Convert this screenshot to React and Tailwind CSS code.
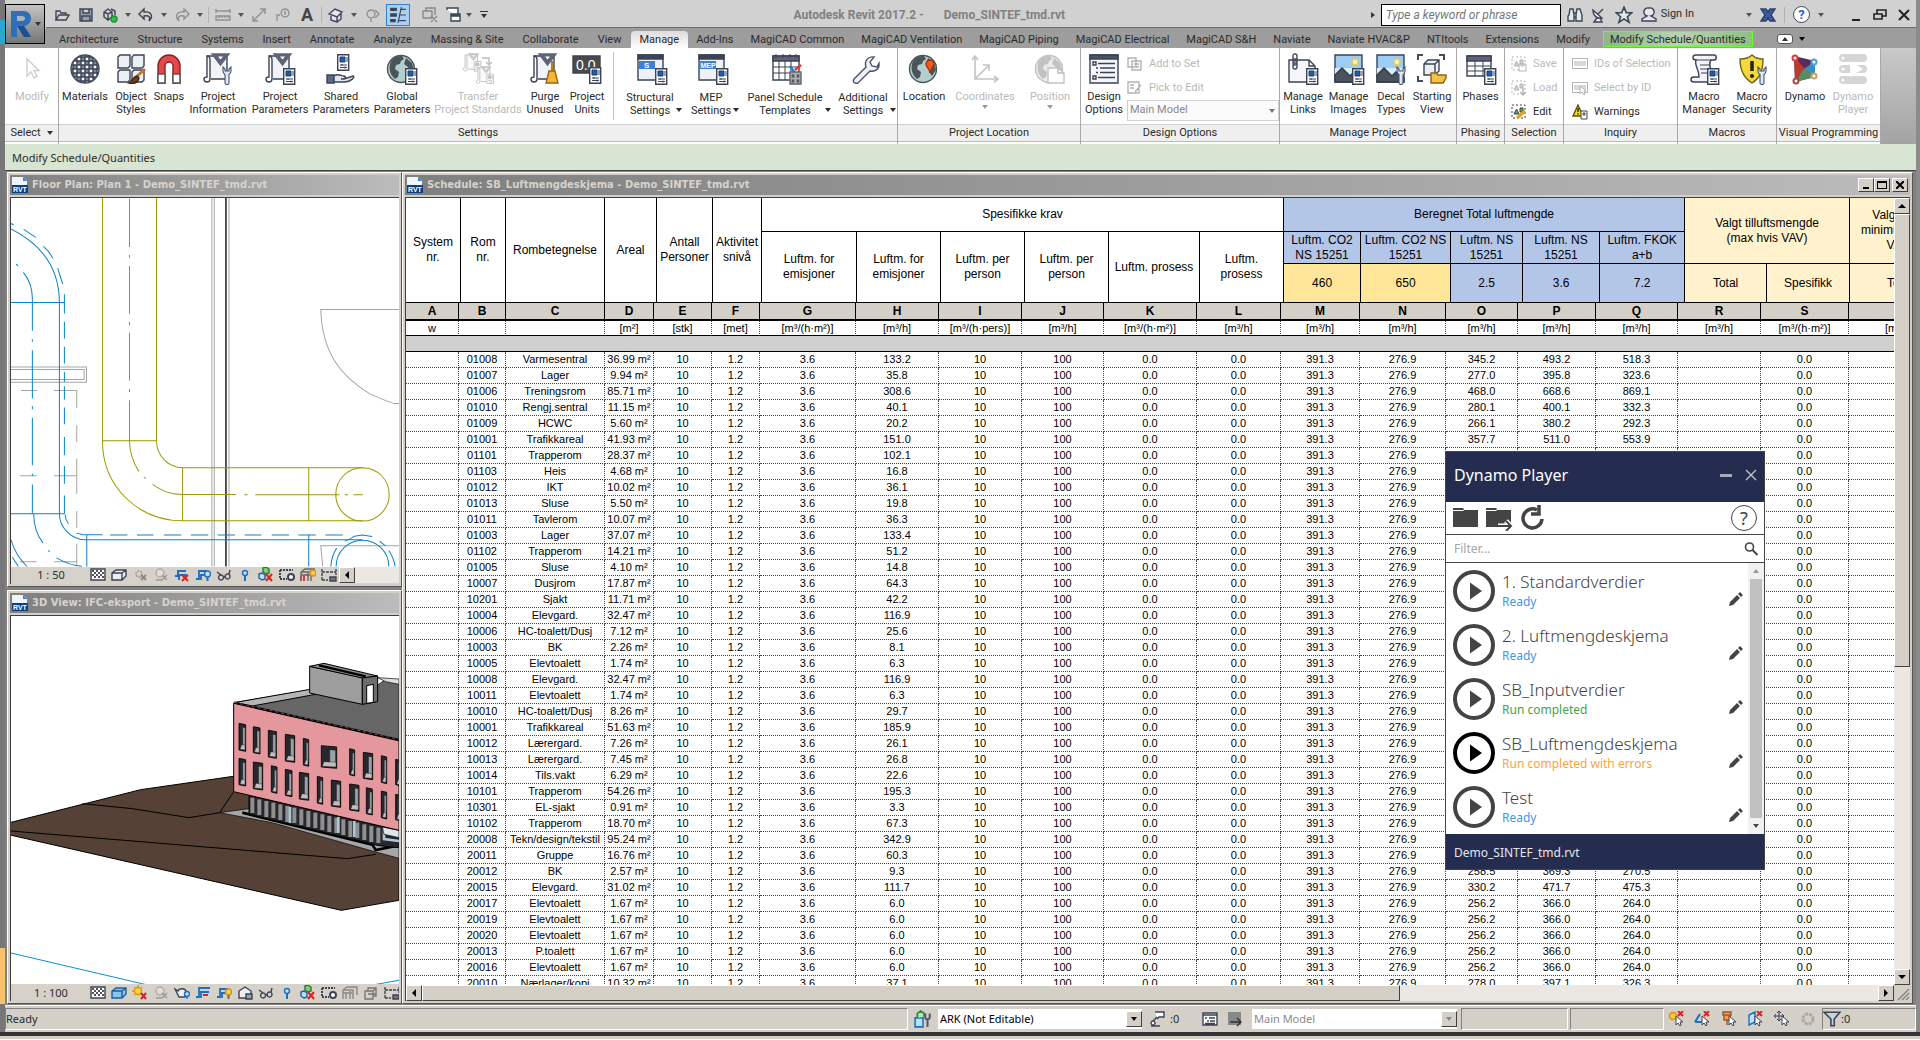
import React, { useState } from 'react';
import clsx from 'clsx';

const tabs = [
  'Architecture', 'Structure', 'Systems', 'Insert', 'Annotate', 'Analyze', 'Massing & Site',
  'Collaborate', 'View', 'Manage', 'Add-Ins', 'MagiCAD Common', 'MagiCAD Ventilation',
  'MagiCAD Piping', 'MagiCAD Electrical', 'MagiCAD S&H', 'Naviate', 'Naviate HVAC&P',
  'NTItools', 'Extensions', 'Modify',
];

// [rom nr, name, area, emission, O, P, Q]
const rooms = [
  ['01008', 'Varmesentral', '36.99', '133.2', '345.2', '493.2', '518.3'],
  ['01007', 'Lager', '9.94', '35.8', '277.0', '395.8', '323.6'],
  ['01006', 'Treningsrom', '85.71', '308.6', '468.0', '668.6', '869.1'],
  ['01010', 'Rengj.sentral', '11.15', '40.1', '280.1', '400.1', '332.3'],
  ['01009', 'HCWC', '5.60', '20.2', '266.1', '380.2', '292.3'],
  ['01001', 'Trafikkareal', '41.93', '151.0', '357.7', '511.0', '553.9'],
  ['01101', 'Trapperom', '28.37', '102.1'],
  ['01103', 'Heis', '4.68', '16.8'],
  ['01012', 'IKT', '10.02', '36.1'],
  ['01013', 'Sluse', '5.50', '19.8'],
  ['01011', 'Tavlerom', '10.07', '36.3'],
  ['01003', 'Lager', '37.07', '133.4'],
  ['01102', 'Trapperom', '14.21', '51.2'],
  ['01005', 'Sluse', '4.10', '14.8'],
  ['10007', 'Dusjrom', '17.87', '64.3'],
  ['10201', 'Sjakt', '11.71', '42.2'],
  ['10004', 'Elevgard.', '32.47', '116.9'],
  ['10006', 'HC-toalett/Dusj', '7.12', '25.6'],
  ['10003', 'BK', '2.26', '8.1'],
  ['10005', 'Elevtoalett', '1.74', '6.3'],
  ['10008', 'Elevgard.', '32.47', '116.9'],
  ['10011', 'Elevtoalett', '1.74', '6.3'],
  ['10010', 'HC-toalett/Dusj', '8.26', '29.7'],
  ['10001', 'Trafikkareal', '51.63', '185.9'],
  ['10012', 'Lærergard.', '7.26', '26.1'],
  ['10013', 'Lærergard.', '7.45', '26.8'],
  ['10014', 'Tils.vakt', '6.29', '22.6'],
  ['10101', 'Trapperom', '54.26', '195.3'],
  ['10301', 'EL-sjakt', '0.91', '3.3'],
  ['10102', 'Trapperom', '18.70', '67.3'],
  ['20008', 'Tekn/design/tekstil', '95.24', '342.9'],
  ['20011', 'Gruppe', '16.76', '60.3'],
  ['20012', 'BK', '2.57', '9.3', '258.5', '369.3', '270.5'],
  ['20015', 'Elevgard.', '31.02', '111.7', '330.2', '471.7', '475.3'],
  ['20017', 'Elevtoalett', '1.67', '6.0', '256.2', '366.0', '264.0'],
  ['20019', 'Elevtoalett', '1.67', '6.0', '256.2', '366.0', '264.0'],
  ['20020', 'Elevtoalett', '1.67', '6.0', '256.2', '366.0', '264.0'],
  ['20013', 'P.toalett', '1.67', '6.0', '256.2', '366.0', '264.0'],
  ['20016', 'Elevtoalett', '1.67', '6.0', '256.2', '366.0', '264.0'],
  ['20010', 'Nærlager/kopi', '10.32', '37.1', '278.0', '397.1', '326.3'],
];

const headCols = [55, 45, 99, 52, 56, 49, 95, 84, 84, 84, 91, 84, 77, 90, 72, 77, 85, 82, 83, 100];
const bodyCols = [53, 47, 99, 49, 58, 48, 96, 83, 83, 82, 93, 84, 79, 86, 72, 78, 82, 83, 88, 101];
const units = [
  'w', '', '', '[m²]', '[stk]', '[met]', '[m³/(h·m²)]', '[m³/h]', '[m³/(h·pers)]', '[m³/h]', '[m³/(h·m²)]',
  '[m³/h]', '[m³/h]', '[m³/h]', '[m³/h]', '[m³/h]', '[m³/h]', '[m³/h]', '[m³/(h·m²)]', '[m³/h]',
];

const scripts = [
  { name: '1. Standardverdier', status: 'Ready', color: 'text-[#3f97dd]' },
  { name: '2. Luftmengdeskjema', status: 'Ready', color: 'text-[#3f97dd]' },
  { name: 'SB_Inputverdier', status: 'Run completed', color: 'text-[#3fa54a]' },
  { name: 'SB_Luftmengdeskjema', status: 'Run completed with errors', color: 'text-[#fba23c]', active: true },
  { name: 'Test', status: 'Ready', color: 'text-[#3f97dd]' },
];

/* ---------- shared bits ---------- */

function Arrow({ className = 'text-[#333]' }) {
  return (
    <svg viewBox="0 0 6 4" className={clsx('h-1 w-1.5 shrink-0', className)}>
      <path d="M0 0h6L3 4z" fill="currentColor" />
    </svg>
  );
}

function Svg({ s = 32, className = 'size-8', children }) {
  return (
    <svg viewBox={`0 0 ${s} ${s}`} className={clsx('shrink-0', className)} fill="none" stroke="#3b4354" strokeWidth="1.4">
      {children}
    </svg>
  );
}

const Sheet = ({ x = 19, y = 15 }) => (
  <g transform={`translate(${x} ${y})`}>
    <path d="M.7.7h11v15.6H.7z" fill="#fff" />
    <path d="M3 3h5v5H3z" fill="#1f5fa8" stroke="#1b3f73" strokeWidth="1" />
    <path d="M10 3v5M3 11h7M3 13.5h7M5 10v2M8 12.500v2" strokeWidth="1" />
  </g>
);

const Scroll = () => (
  <g>
    <path d="M5 3h20v23H9" fill="#f1f3f6" />
    <path d="M5 3c3 0 3 2 3 4v19c0 4-6 4-6 0 0-2 3-2 3-2z" fill="#fff" />
    <path d="M10 1h17l-8.500 11z" fill="#5d6577" stroke="#5d6577" />
    <path d="M16 3.500h5l-2.500 3z" fill="#fff" stroke="none" />
  </g>
);

const Wrench = ({ x = 20, y = 13 }) => (
  <g transform={`translate(${x} ${y})`}>
    <path d="M1 1v4c0 2 1 3 2 3.500V17c0 2 4 2 4 0V8.500C8 8 9 7 9 5V1L7 3v2H3V3z" fill="#dfe7f1" stroke="#44546f" strokeWidth="1.100" />
  </g>
);

const Globe = () => (
  <g>
    <circle cx="15" cy="16" r="13.500" fill="#b6cdd0" stroke="#4b5658" />
    <path d="M5 8c4-5 8-5 11-5l2 3-3 2-1 3-4 1-1 4 4 3-1 5-3 2C4 22 2 15 5 8zM20 5l6 5 2 7-4 6-3-4 1-5-4-3z" fill="#4a5557" stroke="none" />
  </g>
);

const CalGrid = () => (
  <g>
    <path d="M2 3h24v20H2z" fill="#fff" />
    <path d="M2 3h24v5H2z" fill="#5d6577" />
    <path d="M2 13h24M2 18h24M10 8v15M18 8v15" strokeWidth="1" />
  </g>
);

const Mountain = () => (
  <g>
    <path d="M2 2h27v27H2z" fill="#9ccdf2" />
    <path d="M2 15h27v7H2z" fill="#d9ecfa" stroke="none" />
    <circle cx="22" cy="9" r="3" fill="#fff3b0" stroke="#f2c94c" />
    <path d="M2 22l7-7 8 8 4-4 8 6v4H2z" fill="#4a525e" stroke="#333a46" />
  </g>
);

const Brackets = () => (
  <path d="M2 7V2h5M23 2h5v5M2 23v5h5M28 23v5h-5" stroke="#444c5c" strokeWidth="2" />
);

/* ---------- ribbon icons ---------- */

const icons = {
  modify: (
    <Svg><path d="M11 6v17l4-4 3 6 3-1.500-3-6h5z" stroke="#777" fill="#fff" /></Svg>
  ),
  materials: (
    <Svg>
      <defs>
        <pattern id="chk" width="8" height="8" patternUnits="userSpaceOnUse">
          <path d="M0 0h8v8H0z" fill="#fff" /><path d="M0 0h4v4H0zM4 4h4v4H4z" fill="#7b869c" />
        </pattern>
      </defs>
      <circle cx="16" cy="16" r="14" fill="url(#chk)" stroke="#444c5c" />
    </Svg>
  ),
  objectStyles: (
    <Svg>
      <path d="M3 4l2-2h10v11l-2 2H3zM17 4l2-2h10v11l-2 2H17zM3 19l2-2h10v10l-2 2H3zM17 19l2-2h10v10l-2 2H17z" fill="#eceff3" />
      <path d="M30 16l-10 9" stroke="#c5752b" strokeWidth="3" />
      <path d="M22 23c-4 0-4 5-8 7 5 1 9 0 10-5z" fill="#6d4120" stroke="#40260f" />
    </Svg>
  ),
  snaps: (
    <Svg>
      <path d="M5 30V13a11 11 0 0 1 22 0v17h-7V13a4 4 0 0 0-8 0v17z" fill="#e5484a" stroke="#7d2526" />
      <path d="M5 21h7v9H5zM20 21h7v9h-7z" fill="#fff" stroke="#555" />
    </Svg>
  ),
  projectInfo: <Svg><Scroll /><Wrench /></Svg>,
  projectParams: <Svg><Scroll /><Sheet /></Svg>,
  sharedParams: (
    <Svg>
      <Sheet x={12} y={1} />
      <path d="M2 22h7v8H2z" fill="#5d6b8a" />
      <path d="M9 23c4-3 7 0 10 0 3 1 1 3-3 3h3l9-3c3 1-3 6-8 6H9z" fill="#dfe4ec" />
    </Svg>
  ),
  globalParams: <Svg><Globe /><Sheet /></Svg>,
  transfer: (
    <Svg>
      <g transform="scale(.62)"><Scroll /><Sheet x={19} y={13} /></g>
      <path d="M20 5h7v7M24 9l3 3 3-3" />
      <g transform="translate(13 13) scale(.6)"><Scroll /><Sheet x={19} y={13} /></g>
    </Svg>
  ),
  purge: (
    <Svg>
      <Scroll />
      <path d="M23 8v10" stroke="#b77a1c" strokeWidth="2" />
      <path d="M20 18h6l3 12H17z" fill="#f3b53a" stroke="#9a6510" />
    </Svg>
  ),
  units: (
    <Svg>
      <path d="M2 3h27v17H2z" fill="#4a4a4a" />
      <text x="5" y="17" fontSize="14" fill="#fff" stroke="none" fontFamily="Liberation Sans">0.0</text>
      <Sheet x={18} y={14} />
    </Svg>
  ),
  structural: (
    <Svg>
      <path d="M2 2h25v25H2z" fill="#eef1f5" /><path d="M2 2h25v4H2z" fill="#3b4354" />
      <path d="M3 8h16v8H3z" fill="#3f7fd0" stroke="none" />
      <text x="8" y="15" fontSize="8" fontWeight="bold" fill="#fff" stroke="none" fontFamily="Liberation Sans">S</text>
      <Sheet />
    </Svg>
  ),
  mep: (
    <Svg>
      <path d="M2 2h25v25H2z" fill="#eef1f5" /><path d="M2 2h25v4H2z" fill="#3b4354" />
      <path d="M3 8h16v8H3z" fill="#3f7fd0" stroke="none" />
      <text x="3.500" y="15" fontSize="7" fontWeight="bold" fill="#fff" stroke="none" fontFamily="Liberation Sans">MEP</text>
      <Sheet />
    </Svg>
  ),
  panelSchedule: (
    <Svg>
      <path d="M2 3h26v24H2z" fill="#fff" /><path d="M2 3h26v5H2z" fill="#5d6577" />
      <path d="M2 14h26M2 20h26M8 8v19M14 8v19M20 8v19M5 1v4M12 1v4M19 1v4M25 1v4" strokeWidth="1" />
      <path d="M19 13l4 6v3" stroke="#1d7fd6" strokeWidth="2.500" /><path d="M24 17l6-5" stroke="#e33" strokeWidth="2.500" />
      <path d="M19 19h11v12H19z" fill="#a9adb5" stroke="#666" /><path d="M22 21.500v8M27 21.500v8" stroke="#555" strokeDasharray="3 2" strokeWidth="2.500" />
    </Svg>
  ),
  additional: (
    <Svg>
      <path d="M5 26l12-12c-2-6 2-11 8-10l-4 5 2 4 5 1 2-4c1 6-4 9-9 8L9 30c-3 1-6-1-4-4z" fill="#eef1f5" stroke="#4b5465" />
    </Svg>
  ),
  location: (
    <Svg>
      <Globe />
      <path d="M22 20c0-4-4-6-4-9a4 4 0 0 1 8 0c0 3-4 5-4 9z" fill="#f2581c" stroke="#a33208" />
    </Svg>
  ),
  coordinates: (
    <Svg><path d="M6 4v22h22M6 26L20 12M14 12h6v6M3 7l3-4 3 4M25 23l4 3-4 3" stroke="#555" strokeWidth="1.600" /></Svg>
  ),
  position: (
    <Svg><Globe /><path d="M14 15h10l6 5v10H14z" fill="#fff" stroke="#555" /><path d="M24 15v5h6" /></Svg>
  ),
  designOptions: (
    <Svg>
      <path d="M2 2h28v28H2z" fill="#f4f6f9" /><path d="M2 2h28v4H2z" fill="#4a5263" />
      <path d="M5 9h3v3H5zM5 23h3v3H5zM10 10.500h17M12 15h15M12 19.500h15M10 24.500h17M8 15h2M8 19.500h2" />
    </Svg>
  ),
  links: (
    <Svg>
      <path d="M2 7h20l6 6v16H2z" fill="#f5f7fa" /><path d="M22 7v6h6" />
      <path d="M7 1h1a2 2 0 0 1 2 2v3a2 2 0 0 1-4 0V3a2 2 0 0 1 1-2zM7 6h1a2 2 0 0 1 2 2v2a2 2 0 0 1-4 0V8a2 2 0 0 1 1-2zM7 10h1a2 2 0 0 1 2 2v2a2 2 0 0 1-4 0v-2a2 2 0 0 1 1-2z" stroke="#444c5c" />
      <Sheet />
    </Svg>
  ),
  images: <Svg><Mountain /><Sheet /></Svg>,
  decal: <Svg><Mountain /><Wrench x={21} /></Svg>,
  starting: (
    <Svg>
      <Brackets />
      <path d="M8 11l4-4h11v11l-4 4H8zM8 11h11v11M19 11l4-4" fill="#eceff3" />
      <path d="M15 20h5l2 2h8v3l-3 5H15z" fill="#f3c04a" stroke="#8b6412" />
    </Svg>
  ),
  phases: <Svg><CalGrid /><Sheet /></Svg>,
  macroManager: (
    <Svg>
      <path d="M8 2h18c3 0 3 5 0 5h-3c-4 5 2 12 3 22H6c-4 0-4-5 0-5h5C11 16 6 12 8 7c-4 0-4-5 0-5z" fill="#f1f3f6" />
      <path d="M8 7h15M12 12h9M12 16h8M13 20h7" strokeWidth="1" /><Sheet />
    </Svg>
  ),
  macroSecurity: (
    <Svg>
      <path d="M16 2c3 3 7 4 11 4 0 12-3 19-11 24C8 25 4 18 4 6c5 0 9-1 12-4z" fill="#f7d83a" stroke="#6b6420" />
      <path d="M16 8v10" stroke="#222" strokeWidth="3.500" /><circle cx="16" cy="23" r="2" fill="#222" stroke="none" />
      <Wrench x={21} y={13} />
    </Svg>
  ),
  dynamo: (
    <Svg>
      <path d="M5 4l21 5v15L6 29z" fill="#4d3a57" stroke="none" />
      <path d="M5 3l10 12L6 28z" fill="#c0392b" stroke="none" /><path d="M5 3l21 5-10 8z" fill="#5a2a5f" stroke="none" />
      <path d="M26 8v16l-11-8z" fill="#3b8fbf" stroke="none" /><path d="M26 24L6 29l9-14z" fill="#5b8a63" stroke="none" />
      <circle cx="6" cy="5" r="3.500" fill="#d93a3a" stroke="none" /><circle cx="25" cy="9" r="3.500" fill="#47a5d6" stroke="none" />
      <circle cx="25" cy="23" r="3.500" fill="#c9a05a" stroke="none" /><circle cx="7" cy="28" r="3.500" fill="#b04545" stroke="none" />
      <g fill="#fff" stroke="none"><circle cx="6" cy="5" r="1.500" /><circle cx="25" cy="9" r="1.500" /><circle cx="25" cy="23" r="1.500" /><circle cx="7" cy="28" r="1.500" /></g>
    </Svg>
  ),
  dynamoPlayer: (
    <Svg>
      <g fill="#8a8a8a" stroke="none">
        <rect x="2" y="1" width="28" height="8" rx="4" /><rect x="2" y="12" width="28" height="8" rx="4" /><rect x="2" y="23" width="28" height="8" rx="4" />
      </g>
      <g fill="#fff" stroke="none"><circle cx="6" cy="5" r="1.500" /><circle cx="6" cy="16" r="1.500" /><circle cx="6" cy="27" r="1.500" /><path d="M13 8l13 8-13 8z" /></g>
    </Svg>
  ),
};

function Big({ icon, lines, width, disabled, arrow, low }) {
  return (
    <button
      disabled={disabled}
      className={clsx('relative flex shrink-0 flex-col items-center pt-[5px] leading-[13px]', width, disabled && 'text-[#b9b9b9]')}
    >
      <span className={clsx(disabled && 'opacity-35 grayscale')}>{icons[icon]}</span>
      <span className={clsx('flex items-center gap-0.5 whitespace-nowrap', low ? 'mt-1.5' : 'mt-[5px]')}>
        <span>{lines.map((l) => <span key={l} className="block">{l}</span>)}</span>
        {arrow === 'side' && <Arrow className="mt-3 -mr-1" />}
      </span>
      {arrow === 'below' && <Arrow className="mt-0.5 text-[#999]" />}
    </button>
  );
}

function Small({ children, label, disabled }) {
  return (
    <button disabled={disabled} className={clsx('flex h-6 items-center gap-1.5 whitespace-nowrap', disabled && 'text-[#b9b9b9]')}>
      <span className={clsx(disabled && 'opacity-40 grayscale')}>{children}</span>
      {label}
    </button>
  );
}

function Panel({ title, width, children, arrow }) {
  return (
    <section className={clsx('flex shrink-0 flex-col border-r border-[#a8a8a8] bg-white', width)}>
      <div className="flex h-[76px]">{children}</div>
      <h2 className="flex h-[18px] items-center justify-center gap-1.5 border-b border-t border-b-[#bbb] border-t-[#d0d0d0] bg-[#efefef] whitespace-nowrap">
        {title}
        {arrow && <Arrow />}
      </h2>
    </section>
  );
}

const SelIcon = ({ kind }) => (
  <Svg s={16} className="size-4">
    <path d="M1 1h13v13H1z" strokeDasharray="2 2" strokeWidth="1" />
    <path d="M3 10l2.500-5L8 10z" fill="#4caf50" strokeWidth="1" /><path d="M9 4h3v4H9z" fill="#4caf50" strokeWidth="1" />
    {kind === 'save' && <path d="M8 8h7v7H8zM10 8v2h3V8" fill="#fff" strokeWidth="1" />}
    {kind === 'load' && <path d="M12 8v6M9 12l3 3 3-3" />}
    {kind === 'edit' && <path d="M6 14l8-7" stroke="#e8a020" strokeWidth="3" />}
  </Svg>
);

const IdIcon = ({ cursor }) => (
  <Svg s={16} className="size-4">
    <path d="M.5 2.500h15v10H.500zM3 5v5M5 5v5M7 5v5M9 5v5M11 5v5M13 5v5" strokeWidth="1" />
    {cursor && <path d="M8 6v8l2-2 2 3 1-1-1-3h2z" fill="#fff" strokeWidth="1" />}
  </Svg>
);

/* ---------- title bar ---------- */

const qat = [
  { w: 'w-6', name: 'Open', d: 'M2 13V4h4l1 2h5v2M2 13l3-5h10l-3 5z' },
  { w: 'w-6', name: 'Save', d: 'M2 2h12v12H2zM5 2v4h6V2M4 14V9h8v5', fill: '#9aa1ad' },
  { w: 'w-6', name: 'Synchronize', d: 'M2 5l4-3 4 3v5l-4 3-4-3zM2 5l4 2 4-2M6 7v6M9 2l4 2v4', dot: true },
  { w: 'w-3', arrow: true },
  { w: 'w-6', name: 'Undo', d: 'M6 2L1 7l5 5V9c5-1 7 1 5 5 5-5 2-10-5-9z' },
  { w: 'w-3', arrow: true },
  { w: 'w-6', name: 'Redo', d: 'M10 2l5 5-5 5V9c-5-1-7 1-5 5-5-5-2-10 5-9z', off: true },
  { w: 'w-3', arrow: true },
  { sep: true },
  { w: 'w-6', name: 'Measure', d: 'M1 4h14M1 2v4M15 2v4M1 9h14v4H1zM4 9v2M7 9v2M10 9v2M13 9v2', off: true },
  { w: 'w-3', arrow: true },
  { w: 'w-6', name: 'Aligned Dimension', d: 'M2 14L14 2M2 9v5h5M9 2h5v5', off: true },
  { w: 'w-6', name: 'Tag by Category', d: 'M2 14V8h3M10 2a4 4 0 1 0 .1 0M10 4v4', off: true },
  { w: 'w-6', name: 'Text', letter: true },
  { sep: true },
  { w: 'w-6', name: 'Default 3D View', d: 'M1 7l6-5 7 3-5 5zM3 7v6l6 2V9M9 15l4-3V6', fill: '#e5e7eb' },
  { w: 'w-3', arrow: true },
  { w: 'w-6', name: 'Section', d: 'M7 3a4 4 0 1 0 .1 0M11 3l4 4-4 4M7 12v3', off: true },
];

function TitleBar() {
  return (
    <div className="flex h-7 items-center border-b border-[#6c6c6c] bg-[#d1d1d1] pt-0.5">
      <div className="flex h-full items-center pl-1">
        {qat.map((q, i) => {
          if (q.sep) return <span key={i} className="mx-0.5 h-4 border-l border-[#b3b3b3]" />;
          if (q.arrow) return <span key={i} className={clsx('flex justify-center', q.w)}><Arrow className="text-[#555]" /></span>;
          return (
            <button key={i} aria-label={q.name} className={clsx('flex justify-center', q.w, q.off && 'opacity-45')}>
              {q.letter ? <span className="text-[18px] leading-5 font-bold text-[#444]">A</span> : (
                <Svg s={16} className="size-4">
                  <path d={q.d} fill={q.fill || 'none'} />
                  {q.dot && <circle cx="12" cy="12" r="3" fill="#32c04a" stroke="#1e8e34" />}
                </Svg>
              )}
            </button>
          );
        })}
        <button aria-label="Thin Lines" className="ml-0.5 flex h-[22px] w-6 items-center justify-center border border-[#2f7fd6] bg-[#a9d0f5]">
          <Svg s={16} className="size-[18px]"><path d="M1 3h6M1 8h6M1 13h5" strokeWidth="3" /><path d="M8 15l3-14M10 3h5M10 8h5M9 13h6" strokeWidth="1" /></Svg>
        </button>
        <button aria-label="Close Hidden Windows" className="ml-2 flex w-6 justify-center opacity-50">
          <Svg s={16} className="size-4"><path d="M1 4h9v7H1zM4 4V1h9v7M9 9l6 6M15 9l-6 6" /></Svg>
        </button>
        <button aria-label="Switch Windows" className="flex w-6 justify-center">
          <Svg s={16} className="size-4"><path d="M1 3V1h11v6H8M5 7h9v7H5z" fill="#fff" /><path d="M5 8.500h9" strokeWidth="2.500" /></Svg>
        </button>
        <Arrow className="text-[#555]" />
        <span className="ml-2 flex flex-col items-center gap-0.5"><i className="h-px w-2 bg-[#333]" /><Arrow /></span>
      </div>
      <h1 className="flex flex-1 items-center justify-center gap-5 text-[12px] font-bold text-[#808080]">
        <span>Autodesk Revit 2017.2 -</span>
        <span>Demo_SINTEF_tmd.rvt</span>
      </h1>
      <div className="flex items-center gap-2 pr-1">
        <svg viewBox="0 0 4 6" className="h-2 w-1"><path d="M0 0l4 3-4 3z" fill="#333" /></svg>
        <input
          aria-label="Search help"
          placeholder="Type a keyword or phrase"
          className="-mx-0.5 h-[22px] w-[180px] border border-black bg-white px-1 text-[12px] italic outline-none placeholder:text-[#777]"
        />
        <button aria-label="Search"><Svg s={16} className="size-4"><path d="M2 8l1-6h3l1 6v6H1V9zM9 8l1-6h3l2 6v6H9zM7 6h2v4H7z" fill="#e5e7eb" /></Svg></button>
        <button aria-label="Subscription Center"><Svg s={16} className="size-4"><path d="M2 3c0 6 4 9 9 8zM7 7l5-5M6 11l-3 4h8l-2-4" fill="#e5e7eb" /></Svg></button>
        <button aria-label="Favorites"><Svg s={16} className="size-[18px]"><path d="M8 1l2 5h5l-4 3.500 1.500 5L8 11.500 3.500 14.500 5 9.500 1 6h5z" fill="#e5e7eb" /></Svg></button>
        <button className="flex items-center gap-1">
          <Svg s={16} className="size-4"><path d="M8 1a4 4 0 0 0-2 8L1 12v2h14v-2L10 9A4 4 0 0 0 8 1z" fill="#e5e7eb" /></Svg>
          Sign In
        </button>
        <Arrow className="ml-11 text-[#555]" />
        <button aria-label="Exchange Apps"><Svg s={16} className="size-4"><path d="M1 2h5l2 3 2-3h5l-4 6 4 6h-5l-2-3-2 3H1l4-6z" fill="#3f5b95" stroke="#2c4170" /></Svg></button>
        <span className="h-4 border-l border-[#b3b3b3]" />
        <button aria-label="Help" className="flex size-[17px] items-center justify-center rounded-full border border-[#444] bg-white text-[13px] font-bold text-[#2563c4]">?</button>
        <Arrow className="text-[#555]" />
        <button aria-label="Minimize" className="ml-4 flex h-4 w-4 items-end justify-center pb-0.5"><i className="h-0.5 w-2 bg-[#222]" /></button>
        <button aria-label="Restore"><Svg s={16} className="size-4"><path d="M2 7h8v5H2zM5 7V3h9v6h-4" stroke="#222" strokeWidth="1.600" /></Svg></button>
        <button aria-label="Close"><Svg s={16} className="size-4"><path d="M3 3l10 10M13 3L3 13" stroke="#222" strokeWidth="2" /></Svg></button>
      </div>
    </div>
  );
}

function TabStrip({ tab, setTab }) {
  return (
    <nav className="flex h-5 items-end bg-[#9d9d9d] pl-1">
      {tabs.map((t, i) => (
        <button
          key={t}
          onClick={() => setTab(t)}
          className={clsx(
            'h-[17px] leading-[14px] whitespace-nowrap',
            i < 9 ? 'pr-2.5 pl-[9px]' : 'pr-[9px] pl-2',
            t === tab && 'rounded-t-sm bg-linear-to-b from-[#dcdcdc] to-white',
          )}
        >
          {t}
        </button>
      ))}
      <button className="mb-px ml-1 h-4 border border-[#6dfb2e] bg-linear-to-r from-[#8fb58a] via-[#b9d3b2] to-[#8fbf85] px-1.5 leading-[13px] whitespace-nowrap">
        Modify Schedule/Quantities
      </button>
      <button aria-label="Minimize ribbon" className="mb-1 ml-6 flex items-center gap-1.5">
        <span className="flex h-2.5 w-4 items-center justify-center rounded-[3px] border border-[#555] bg-white">
          <Arrow className="rotate-180" />
        </span>
        <Arrow className="text-black" />
      </button>
    </nav>
  );
}

function Ribbon() {
  return (
    <div className="flex h-24 bg-linear-to-b from-[#c9c9c9] to-[#a3a3a3]">
      <Panel title="Select" width="w-[54px]" arrow>
        <Big icon="modify" lines={['Modify']} width="w-[54px]" disabled />
      </Panel>
      <Panel title="Settings" width="w-[839px]">
        <Big icon="materials" lines={['Materials']} width="w-[52px]" />
        <Big icon="objectStyles" lines={['Object', 'Styles']} width="w-[40px]" />
        <Big icon="snaps" lines={['Snaps']} width="w-[36px]" />
        <Big icon="projectInfo" lines={['Project', 'Information']} width="w-[62px]" />
        <Big icon="projectParams" lines={['Project', 'Parameters']} width="w-[62px]" />
        <Big icon="sharedParams" lines={['Shared', 'Parameters']} width="w-[60px]" />
        <Big icon="globalParams" lines={['Global', 'Parameters']} width="w-[62px]" />
        <Big icon="transfer" lines={['Transfer', 'Project Standards']} width="w-[90px]" disabled />
        <Big icon="purge" lines={['Purge', 'Unused']} width="w-[44px]" />
        <Big icon="units" lines={['Project', 'Units']} width="w-[40px]" />
        <span className="my-1 mr-2 ml-1.5 border-l border-[#c4c4c4]" />
        <Big icon="structural" lines={['Structural', 'Settings']} width="w-[60px]" arrow="side" low />
        <Big icon="mep" lines={['MEP', 'Settings']} width="w-[62px]" arrow="side" low />
        <Big icon="panelSchedule" lines={['Panel Schedule', 'Templates']} width="w-[86px]" arrow="side" low />
        <Big icon="additional" lines={['Additional', 'Settings']} width="w-[70px]" arrow="side" low />
      </Panel>
      <Panel title="Project Location" width="w-[183px]">
        <Big icon="location" lines={['Location']} width="w-[52px]" />
        <Big icon="coordinates" lines={['Coordinates']} width="w-[70px]" arrow="below" disabled />
        <Big icon="position" lines={['Position']} width="w-[60px]" arrow="below" disabled />
      </Panel>
      <Panel title="Design Options" width="w-[199px]">
        <Big icon="designOptions" lines={['Design', 'Options']} width="w-[46px]" />
        <div className="flex flex-1 flex-col pt-1">
          <Small label="Add to Set" disabled>
            <Svg s={16} className="size-4"><path d="M1 2h8v9H1zM5 5h9v9H5zM7 8h5M7 11h5" fill="#fff" /></Svg>
          </Small>
          <Small label="Pick to Edit" disabled>
            <Svg s={16} className="size-4"><path d="M1 2h11v11H1zM3 5h4M3 8h4M8 12l6-7" fill="#fff" /></Svg>
          </Small>
          <div className="relative">
            <select aria-label="Active design option" disabled className="h-[21px] w-full appearance-none border border-[#cfcfcf] bg-[#fbfbfb] px-0.5 text-[#8a8a8a]">
              <option>Main Model</option>
            </select>
            <span className="absolute inset-y-0 right-1 flex items-center"><Arrow className="text-[#777]" /></span>
          </div>
        </div>
      </Panel>
      <Panel title="Manage Project" width="w-[177px]">
        <Big icon="links" lines={['Manage', 'Links']} width="w-[46px]" />
        <Big icon="images" lines={['Manage', 'Images']} width="w-[45px]" />
        <Big icon="decal" lines={['Decal', 'Types']} width="w-[40px]" />
        <Big icon="starting" lines={['Starting', 'View']} width="w-[42px]" />
      </Panel>
      <Panel title="Phasing" width="w-[48px]">
        <Big icon="phases" lines={['Phases']} width="w-[47px]" />
      </Panel>
      <Panel title="Selection" width="w-[59px]">
        <div className="flex flex-col pt-1 pl-1.5">
          <Small label="Save" disabled><SelIcon kind="save" /></Small>
          <Small label="Load" disabled><SelIcon kind="load" /></Small>
          <Small label="Edit"><SelIcon kind="edit" /></Small>
        </div>
      </Panel>
      <Panel title="Inquiry" width="w-[114px]">
        <div className="flex flex-col pt-1 pl-2">
          <Small label="IDs of  Selection" disabled><IdIcon /></Small>
          <Small label="Select  by ID" disabled><IdIcon cursor /></Small>
          <Small label="Warnings">
            <Svg s={16} className="size-4">
              <path d="M6 1l5 11H1z" fill="#ffd91a" stroke="#5c5310" /><path d="M6 4v4M6 9v1.500" stroke="#222" />
              <path d="M9 7h6v8H9zM11 9h2v2h-2z" fill="#fff" strokeWidth="1" />
            </Svg>
          </Small>
        </div>
      </Panel>
      <Panel title="Macros" width="w-[99px]">
        <Big icon="macroManager" lines={['Macro', 'Manager']} width="w-[52px]" />
        <Big icon="macroSecurity" lines={['Macro', 'Security']} width="w-[44px]" />
      </Panel>
      <Panel title="Visual Programming" width="w-[104px]">
        <Big icon="dynamo" lines={['Dynamo']} width="w-[56px]" />
        <Big icon="dynamoPlayer" lines={['Dynamo', 'Player']} width="w-[40px]" disabled />
      </Panel>
    </div>
  );
}

/* ---------- MDI windows ---------- */

function RvtIcon() {
  return (
    <svg viewBox="0 0 16 16" className="size-4 shrink-0">
      <path d="M0 0h11l4 4v5H0z" fill="#eef5fd" /><path d="M11 0v4h4z" fill="#3f7fd0" />
      <path d="M0 8h16v8H0z" fill="#0b3f86" />
      <text x="1" y="14.500" fontSize="7" fontWeight="bold" fill="#fff" fontFamily="Liberation Sans">RVT</text>
    </svg>
  );
}

function WinButton({ label, className, children }) {
  return (
    <button aria-label={label} className={clsx('flex shrink-0 items-center justify-center border border-t-white border-r-[#404040] border-b-[#404040] border-l-white bg-[#d4d0c8]', className)}>
      {children}
    </button>
  );
}

const Tri = ({ d }) => <svg viewBox="0 0 8 8" className="size-2"><path d={d} fill="#000" /></svg>;

function Window({ title, buttons, children, className }) {
  return (
    <section className={clsx('flex min-h-0 min-w-0 flex-col border border-t-white border-r-[#555] border-b-[#555] border-l-white bg-[#d4d0c8] p-0.5', className)}>
      <header className="flex h-5 shrink-0 items-center gap-1 bg-linear-to-r from-[#7f7f7f] to-[#bcbcbc] pl-0.5 pr-0.5">
        <RvtIcon />
        <h2 className="flex-1 truncate font-['DejaVu_Sans'] text-[10px] leading-4 font-bold text-[#d6d3cc]">{title}</h2>
        {buttons && (
          <div className="flex">
            <WinButton label="Minimize window" className="h-3.5 w-4 items-end pb-0.5"><i className="h-0.5 w-1.5 bg-black" /></WinButton>
            <WinButton label="Maximize window" className="h-3.5 w-4"><i className="h-2 w-2.5 border border-t-2 border-black" /></WinButton>
            <WinButton label="Close window" className="ml-0.5 h-3.5 w-4"><svg viewBox="0 0 8 8" className="size-2"><path d="M0 0l8 8M8 0L0 8" stroke="#000" strokeWidth="2" /></svg></WinButton>
          </div>
        )}
      </header>
      <div className="mt-0.5 flex min-h-0 flex-1 flex-col border-t border-l border-[#404040]">{children}</div>
    </section>
  );
}

const viewIcons = {
  detail: <><path d="M1 2h14v11H1z" fill="#fff" /><path d="M2 4h2m2 0h2m2 0h2M4 6h2m2 0h2m2 0h2M2 8h2m2 0h2m2 0h2M4 10h2m2 0h2m2 0h2" stroke="#555" strokeWidth="2" /></>,
  box: <path d="M1 6l4-3h10v6l-4 4H1zM1 6h10v7M11 6l4-3" fill="#eee" />,
  boxBlue: <path d="M1 6l4-3h10v6l-4 4H1zM1 6h10v7M11 6l4-3" fill="#8cc4f0" stroke="#1d5fa0" />,
  sunOff: <><circle cx="7" cy="7" r="3" fill="none" stroke="#999" strokeDasharray="2 1" /><path d="M9 8l5 5M14 8l-5 5" stroke="#888" strokeWidth="2" /></>,
  sun: <><circle cx="6" cy="6" r="3.500" fill="#ffd33a" stroke="#d89a10" /><path d="M6 0v2M0 6h2M2 2l1 1M10 2l-1 1M2 10l1-1" stroke="#d89a10" /><path d="M9 8l5 6M14 8l-5 6" stroke="#d22" strokeWidth="2" /></>,
  shadowOff: <><circle cx="7" cy="6" r="4" fill="#ddd" stroke="#aaa" /><path d="M3 13h6M9 8l5 5M14 8l-5 5" stroke="#999" strokeWidth="1.600" /></>,
  cropOff: <><path d="M1 9h3V4h8M5 13V8h8" stroke="#1d6fc0" strokeWidth="2" /><path d="M8 8l6 6M14 8l-6 6" stroke="#d22" strokeWidth="2" /></>,
  crop: <><path d="M1 12h3V3h11M6 13V7h8" stroke="#1d6fc0" strokeWidth="1.800" /><path d="M8 10h5" stroke="#d22" strokeWidth="2" /></>,
  cropBulb: <><path d="M1 12h3V4h8M6 13V8h4" stroke="#1d6fc0" strokeWidth="1.800" /><circle cx="12.500" cy="7" r="3" fill="#bfe0ff" stroke="#1d6fc0" /><path d="M12.500 10v4" stroke="#1d6fc0" strokeWidth="2" /></>,
  cropLamp: <><path d="M1 12h3V4h8M6 13V8h4" stroke="#1d6fc0" strokeWidth="1.800" /><circle cx="12.500" cy="7" r="3" fill="#ffd33a" stroke="#d8901a" /><path d="M12.500 10v4" stroke="#666" strokeWidth="2" /></>,
  teapot: <><path d="M1 4l3 2c1-3 7-3 8 0l-1 6H5L3 8z" fill="#eee" /><circle cx="13" cy="9" r="2.500" fill="#bfe0ff" stroke="#1d6fc0" /><path d="M13 11v3" stroke="#1d6fc0" /></>,
  lock: <><path d="M2 6l6-4 6 4v7H2z" fill="#eee" /><path d="M9 9h6v5H9z" fill="#8aa" /></>,
  glasses: <path d="M1 5l4 3M5 8a2.500 2.500 0 1 0 .1 0M7 10h3M11.500 7a2.500 2.500 0 1 0 .1 0M13 7l1-4" />,
  bulb: <><circle cx="8" cy="6" r="2.500" fill="#bfe0ff" stroke="#1d6fc0" /><path d="M8 9v5" stroke="#1d6fc0" strokeWidth="2" /></>,
  cubes: <><path d="M5 1l3-1 3 2v4L8 7 5 5z" fill="#7ccf7c" stroke="#2a7a2a" /><path d="M1 7l3-1 3 2v4l-3 1-3-2z" fill="#bfe0ff" stroke="#1d5fa0" /><path d="M8 7l6 7M14 7l-6 7" stroke="#d22" strokeWidth="2" /></>,
  film: <><path d="M1 3h13M1 12h7M1 3v9" strokeWidth="2" strokeDasharray="2 1" /><circle cx="12" cy="10" r="3" fill="#fff" strokeWidth="2" /></>,
  analytic: <><path d="M1 5h10M1 5v9M4 8v6M8 6v8M1 8h9M1 5l4-3h10M11 8v6" stroke="#666" /><path d="M1 9v5M4 9v5" stroke="#c33" /><circle cx="13" cy="6" r="3" fill="#ffc83a" stroke="#d8901a" /></>,
  analyticOff: <path d="M1 5h10v9M1 5v9M4 8v6M8 6v8M1 8h9M1 5l4-3h10v8" stroke="#888" />,
  cube: <path d="M2 6h8v8H2zM5 6V3h8v8h-3M10 6l3-3M5 9h8" stroke="#777" />,
  constraint: <><path d="M1 2v12M15 2v6M1 5h14M1 13h6" strokeDasharray="3 1" /><path d="M9 10h6v4H9z" fill="#777" /></>,
};

function ViewBar({ scale, list, scroll }) {
  return (
    <div className="flex h-[17px] shrink-0 items-center overflow-hidden bg-[#d6d2ca]">
      <button className="w-[76px] shrink-0 pl-1 text-center font-['Noto_Sans'] text-[11px] leading-4">{scale}</button>
      {list.map((name) => (
        <button key={name} aria-label={name} className="flex w-[21px] shrink-0 justify-center">
          <Svg s={16} className="size-4">{viewIcons[name]}</Svg>
        </button>
      ))}
      {scroll && (
        <>
          <WinButton label="Scroll left" className="h-4 w-4"><Tri d="M6 0v8L2 4z" /></WinButton>
          <span className="h-4 flex-1 bg-[#ebe8e3]" />
        </>
      )}
    </div>
  );
}

function FloorPlan() {
  return (
    <svg viewBox="36 84 1164 1104" preserveAspectRatio="xMinYMin slice" className="min-h-0 w-full flex-1 bg-white" fill="none" strokeWidth="3">
      <g stroke="#a5a5a5">
        <path d="M638 84v1104M645 84v1104M689 84v1104" />
        <path d="M1200 418H964c4 130 60 200 146 252 30 14 50 22 74 30h16" />
        <path d="M36 590h226v46H36M36 598h219v30H36" />
        <path d="M66 661h48M165 661h68v52M233 765v50M233 865v50M63 916h50M165 916h68v55M233 1022v50M233 1120v66M63 1174h50M165 1174h68M1200 1126H964l6 62" />
      </g>
      <path d="M680 84v1104" stroke="#000" strokeWidth="4" />
      <g stroke="#999b00">
        <path d="M310 84v727c0 140 110 240 240 240h540M472 84v727c0 46 36 81 78 81h540M310 811h162M550 892v159M928 892v159" />
        <circle cx="1089" cy="972" r="80" />
        <path d="M391 86v145M391 255v8M391 288v143M391 455v10M391 488v143M391 656v9M391 690v121c0 35 8 60 28 92M434 920l6 5M460 942c30 20 50 30 90 30h160M735 973h10M768 973h252M1036 973h10M1062 973h28" />
      </g>
      <g stroke="#0a84c6">
        <path d="M36 177c90 45 145 115 145 220v633c0 42 36 78 81 78h827" />
        <path d="M36 160l8 5M74 178l36 24M133 229c14 12 22 22 28 36M176 294l15 48M196 372v58M196 455v50M196 530v50M196 605v30M196 648v40M196 712v50M196 800v55M196 887v53M196 975v55" />
        <path d="M51 282l6 5M73 307c18 22 27 45 27 78v97M100 507v8M100 540v145M100 708v9M100 742v143M100 910v7M100 942v88M104 1030c0 32 8 62 28 88M148 1140l4 4M172 1162c25 14 48 24 76 25" />
        <path d="M36 397h160M36 1030h160M263 1094v94M928 1094v94M198 1032c0 12 4 20 10 28M232 1088l20 5h58M333 1094h52M413 1094h50M494 1094h52M575 1094h52M655 1094h52M736 1094h50M817 1094h52M897 1094h52M978 1094h52M1060 1098l28-4 30 4M1140 1112l18 14M1168 1140c10 15 16 30 19 48M1012 1133c-12 16-16 34-18 55" />
        <path d="M1010 1188a79 79 0 0 1 158 0M1036 1112l26-12M36 1108c10 35 25 55 48 80M40 1160l18 28" />
      </g>
    </svg>
  );
}

const openings = [
  [720, 427, 20, 84], [763, 437, 20, 82], [808, 448, 24, 84], [859, 460, 28, 84], [913, 472, 16, 84], [967, 494, 46, 68],
  [1052, 503, 15, 82], [1093, 514, 28, 82], [1147, 524, 16, 84], [1190, 535, 16, 80],
  [720, 532, 20, 83], [763, 543, 28, 84], [817, 554, 17, 83], [859, 565, 20, 82], [901, 574, 28, 84], [955, 586, 16, 84],
  [997, 597, 28, 82], [1052, 609, 28, 82], [1102, 620, 18, 82], [1147, 630, 16, 84], [1190, 640, 16, 80],
];

function Building() {
  return (
    <svg viewBox="36 105 1164 1107" preserveAspectRatio="xMinYMin slice" className="min-h-0 w-full flex-1 bg-white" fill="none" stroke="#000" strokeWidth="3">
      <path d="M20 728l405-102 278-40 497 60v312l-173 30L20 759z" fill="#554136" />
      <path d="M250 668l150 15 170 27 92-15 41-61M36 750l584 48 425 35 85-13" />
      <path d="M662 695l88-12 450 112v37l-80-22-300-85z" fill="#a6a6a6" strokeWidth="2" />
      <path d="M730 695l390 96 10 16 70-14" strokeWidth="8" />
      <path d="M750 643l450 102v55l-60-6-390-94z" fill="#26282b" />
      <g stroke="#8f8f8f" strokeWidth="12">
        {Array.from({ length: 19 }, (_, i) => (
          <path key={i} d={`M${760 + i * 21} ${650 + i * 5}v${46 + (i % 3)}`} />
        ))}
      </g>
      <g stroke="#a9c8dc" strokeWidth="8"><path d="M873 678v48M1018 708v48M1066 720v48M1155 740v34l45 6" /></g>
      <path d="M1150 738l50 10v22l-45-10z" fill="#dfe6ea" strokeWidth="2" />
      <path d="M705 365l240-40 145 20 70-50 40 12v180z" fill="#666" strokeWidth="2" />
      <path d="M705 365l240-42 5 17-190 35z" fill="#b5b5b5" />
      <path d="M1136 290l64 4v16l-40-8z" fill="#ddd" strokeWidth="2" />
      <path d="M932 256l158 34v80l-158-34z" fill="#9e9e9e" />
      <path d="M932 256l43-9 161 38-46 6z" fill="#8a8a8a" />
      <path d="M960 253l140 33" strokeWidth="7" />
      <path d="M1090 291l46-6v77l-46 8z" fill="#6d6d6d" />
      <path d="M1103 314l20-4v54l-20 3z" fill="#fff" />
      <path d="M704 366l496 112v270L704 632z" fill="#e4979d" />
      <path d="M705 365l495 112" strokeWidth="7" /><path d="M705 364l495 112" stroke="#b76a70" strokeWidth="2" strokeDasharray="10 8" />
      {openings.map(([x, y, w, h]) => (
        <g key={`${x}-${y}`} strokeWidth="2.500">
          <path d={`M${x} ${y}l${w} 4v${h - 4}l${-w} -4z`} fill="#26282b" />
          <path d={`M${x + w * 0.55} ${y + 12}l${w * 0.38} 2v${h - 26}l${-w * 0.38} -2z`} fill="#9aa0a6" strokeWidth="1" />
          <path d={`M${x + 3} ${y + h - 6}l5 -14 ${w - 10} 2v14z`} fill="#c3bdbf" strokeWidth="1" />
        </g>
      ))}
      <path d="M36 1116l414 97M1120 1212l80-14" stroke="#0a8fd0" />
    </svg>
  );
}

/* ---------- schedule ---------- */

const th = 'border-r border-b border-black p-0 font-normal overflow-hidden';

function Cols({ widths }) {
  return <colgroup>{widths.map((w, i) => <col key={i} style={{ width: w }} />)}</colgroup>;
}

const total = (widths) => widths.reduce((a, b) => a + b, 0);

function ScheduleHeader() {
  const blue = 'bg-[#b4c6e7]';
  const cream = 'bg-[#fff2cc]';
  return (
    <table className="table-fixed border-separate border-spacing-0 text-center text-[12px] leading-[15px]" style={{ width: total(headCols) }}>
      <Cols widths={headCols} />
      <thead>
        <tr className="h-[34px]">
          <th rowSpan={3} className={th}>System<br />nr.</th>
          <th rowSpan={3} className={th}>Rom<br />nr.</th>
          <th rowSpan={3} className={th}>Rombetegnelse</th>
          <th rowSpan={3} className={th}>Areal</th>
          <th rowSpan={3} className={th}>Antall<br />Personer</th>
          <th rowSpan={3} className={th}>Aktivitet<br />snivå</th>
          <th colSpan={6} className={th}>Spesifikke krav</th>
          <th colSpan={5} className={clsx(th, blue)}>Beregnet Total luftmengde</th>
          <th colSpan={2} rowSpan={2} className={clsx(th, cream)}>Valgt tilluftsmengde<br />(max hvis VAV)</th>
          <th rowSpan={2} className={clsx(th, cream)}>Valgt tilluft<br />minimum (hvis<br />VAV)</th>
        </tr>
        <tr className="h-[32px]">
          <th rowSpan={2} className={th}>Luftm. for<br />emisjoner</th>
          <th rowSpan={2} className={th}>Luftm. for<br />emisjoner</th>
          <th rowSpan={2} className={th}>Luftm. per<br />person</th>
          <th rowSpan={2} className={th}>Luftm. per<br />person</th>
          <th rowSpan={2} className={th}>Luftm. prosess</th>
          <th rowSpan={2} className={th}>Luftm.<br />prosess</th>
          <th className={clsx(th, blue)}>Luftm. CO2<br />NS 15251</th>
          <th className={clsx(th, blue)}>Luftm. CO2 NS<br />15251</th>
          <th className={clsx(th, blue)}>Luftm. NS<br />15251</th>
          <th className={clsx(th, blue)}>Luftm. NS<br />15251</th>
          <th className={clsx(th, blue)}>Luftm. FKOK<br />a+b</th>
        </tr>
        <tr className="h-[39px]">
          <th className={clsx(th, 'bg-[#ffe699]')}>460</th>
          <th className={clsx(th, 'bg-[#ffe699]')}>650</th>
          <th className={clsx(th, blue)}>2.5</th>
          <th className={clsx(th, blue)}>3.6</th>
          <th className={clsx(th, blue)}>7.2</th>
          <th className={clsx(th, cream)}>Total</th>
          <th className={clsx(th, cream)}>Spesifikk</th>
          <th className={clsx(th, cream)}>Total</th>
        </tr>
      </thead>
    </table>
  );
}

function ScheduleBody() {
  const td = 'border-r border-b border-dotted border-[#444] p-0';
  return (
    <table className="table-fixed border-separate border-spacing-0 text-center text-[11px] leading-[15px] whitespace-nowrap" style={{ width: total(bodyCols) }}>
      <Cols widths={bodyCols} />
      <thead>
        <tr className="h-[18px]">
          {bodyCols.map((_, i) => (
            <th key={i} className="border-r border-b-2 border-black bg-[#d4d0c8] p-0 text-[12px] leading-4 font-bold">
              {String.fromCharCode(65 + i)}
            </th>
          ))}
        </tr>
        <tr className="h-[15px]">
          {units.map((u, i) => (
            <th key={i} className="border-r border-b border-r-[#444] border-b-black p-0 leading-[14px] font-normal [border-right-style:dotted]">{u}</th>
          ))}
        </tr>
      </thead>
      <tbody>
        <tr className="h-4"><td colSpan={20} className="border-b border-black bg-[#d0d0d0] p-0" /></tr>
        {rooms.map(([nr, name, area, em, o, p, q]) => (
          <tr key={nr} className="h-4">
            {['', nr, name, `${area} m²`, '10', '1.2', '3.6', em, '10', '100', '0.0', '0.0', '391.3', '276.9', o, p, q, '', '0.0', ''].map((v, i) => (
              <td key={i} className={td}>{v}</td>
            ))}
          </tr>
        ))}
      </tbody>
    </table>
  );
}

function Schedule() {
  return (
    <div className="flex min-h-0 flex-1 flex-col font-['Liberation_Sans'] text-black">
      <div className="flex min-h-0 flex-1">
        <div className="min-w-0 flex-1 overflow-hidden bg-white">
          <ScheduleHeader />
          <ScheduleBody />
        </div>
        <div className="flex w-4 flex-col bg-[#ebe8e3]">
          <WinButton label="Scroll up" className="h-4 w-4"><Tri d="M0 6h8L4 2z" /></WinButton>
          <div className="h-[453px] border border-t-white border-r-[#404040] border-b-[#404040] border-l-white bg-[#d4d0c8]" />
          <WinButton label="Scroll down" className="mt-auto h-4 w-4"><Tri d="M0 2h8L4 6z" /></WinButton>
        </div>
      </div>
      <div className="flex h-4 shrink-0 bg-[#ebe8e3]">
        <WinButton label="Scroll left" className="h-4 w-4"><Tri d="M6 0v8L2 4z" /></WinButton>
        <div className="w-[65%] border border-t-white border-r-[#404040] border-b-[#404040] border-l-white bg-[#d4d0c8]" />
        <WinButton label="Scroll right" className="ml-auto h-4 w-4"><Tri d="M2 0v8l4-4z" /></WinButton>
        <svg viewBox="0 0 16 16" className="size-4 bg-[#d4d0c8]"><path d="M4 15L15 4M8 15l7-7M12 15l3-3" stroke="#888" strokeWidth="1.500" /></svg>
      </div>
    </div>
  );
}

/* ---------- Dynamo Player ---------- */

function DynamoPlayer() {
  return (
    <section className="absolute top-[280px] right-[151px] flex w-80 flex-col border border-[#444] bg-white font-['Noto_Sans']">
      <header className="flex h-[50px] items-center bg-[#242d4f] pr-1.5 pb-1 pl-2 text-white">
        <h2 className="flex-1 text-[16px] leading-5">Dynamo Player</h2>
        <button aria-label="Minimize player" className="mr-3 h-[3px] w-3 bg-[#a7abb9]" />
        <button aria-label="Close player">
          <svg viewBox="0 0 14 14" className="size-3.5"><path d="M2 2l10 10M12 2L2 12" stroke="#c3c6d0" strokeWidth="1.300" /></svg>
        </button>
      </header>
      <div className="flex h-[33px] items-center gap-[7px] border-b border-[#444] px-[7px] text-[#444]">
        <button aria-label="Browse folder"><svg viewBox="0 0 26 20" className="h-5 w-[26px]"><path d="M0 0h10l2 2h13v17H0z" fill="currentColor" /><path d="M0 2.500h10l2-1.500" stroke="#fff" fill="none" /></svg></button>
        <button aria-label="Open folder">
          <svg viewBox="0 0 27 25" className="h-[25px] w-[27px]"><path d="M0 2h10l2 2h13v17H0z" fill="currentColor" /><path d="M0 4.500h10l2-1.500" stroke="#fff" fill="none" /><path d="M12 20h13M20 15l5 5-5 5" stroke="#fff" strokeWidth="5" fill="none" /><path d="M12 20h13M20 15l5 5-5 5" stroke="currentColor" strokeWidth="2" fill="none" /></svg>
        </button>
        <button aria-label="Refresh"><svg viewBox="0 0 26 26" className="size-[26px]"><path d="M22 14a9.500 9.500 0 1 1-5-9" stroke="currentColor" strokeWidth="3.500" fill="none" /><path d="M19 0v9h-8" stroke="currentColor" strokeWidth="3.500" fill="none" /></svg></button>
        <button aria-label="Player help" className="ml-auto size-[26px] rounded-full border border-[#444] text-[18px] leading-6">?</button>
      </div>
      <div className="flex h-7 items-center border-b border-[#444] pr-[5px] pl-2">
        <input aria-label="Filter scripts" placeholder="Filter..." className="min-w-0 flex-1 bg-transparent text-[12px] outline-none placeholder:text-[#a5a5a5]" />
        <svg viewBox="0 0 16 16" className="size-4"><circle cx="6.500" cy="6" r="4" stroke="#444" strokeWidth="1.600" fill="none" /><path d="M9.500 9l5 5" stroke="#444" strokeWidth="2" /></svg>
      </div>
      <div className="flex">
        <ul className="flex-1 pt-px">
          {scripts.map((s) => (
            <li key={s.name} className="flex h-[54px] items-center gap-[7px] pr-[5px] pl-[7px]">
              <button aria-label={`Run ${s.name}`} className={s.active ? 'text-black' : 'text-[#444]'}>
                <svg viewBox="0 0 42 42" className="size-[42px]"><circle cx="21" cy="21" r="19" fill="none" stroke="currentColor" strokeWidth="4" /><path d="M17 12.500v17l12-8.500z" fill="currentColor" /></svg>
              </button>
              <div className="flex-1 pt-0.5 leading-5">
                <div className="text-[17px] font-light text-[#444]">{s.name}</div>
                <div className={clsx('text-[12px]', s.color)}>{s.status}</div>
              </div>
              <button aria-label={`Edit ${s.name}`} className="mt-4">
                <svg viewBox="0 0 14 14" className="size-3.5"><path d="M0 14l1-4 7-7 3 3-7 7zM9 2l2-2 3 3-2 2z" fill="#444" /></svg>
              </button>
            </li>
          ))}
        </ul>
        <div className="flex w-4 flex-col items-center bg-[#f1f1f1]">
          <span className="flex h-4 items-center"><Arrow className="rotate-180 text-[#999]" /></span>
          <span className="w-3 flex-1 bg-[#c1c1c1]" />
          <span className="flex h-4 items-center"><Arrow className="text-[#444]" /></span>
        </div>
      </div>
      <footer className="flex h-[35px] items-center bg-[#242d4f] px-2 pt-0.5 text-[12px] text-[#e6e7ec]">Demo_SINTEF_tmd.rvt</footer>
    </section>
  );
}

/* ---------- status bar ---------- */

const recess = 'h-[22px] border border-t-[#808080] border-r-white border-b-white border-l-[#808080]';

function StatusSelect({ label, value, disabled, className }) {
  return (
    <div className={clsx('relative h-5 bg-white', className)}>
      <select aria-label={label} disabled={disabled} className={clsx('h-5 w-full appearance-none bg-white pl-0.5', disabled ? 'text-[#8a8a8a]' : 'text-black')}>
        <option>{value}</option>
      </select>
      <span className="pointer-events-none absolute top-0.5 right-0 flex h-4 w-4 items-center justify-center border border-t-white border-r-[#404040] border-b-[#404040] border-l-white bg-[#d4d0c8]">
        <Arrow className={disabled ? 'text-[#888]' : 'text-black'} />
      </span>
    </div>
  );
}

const cursor = <path d="M8 5v9l2-2 2 3 1-1-1-3h3z" fill="#fff" strokeWidth="1" />;
const redX = <path d="M10 0l5 5M15 0l-5 5" stroke="#d22" strokeWidth="2" />;
const selectIcons = [
  { name: 'Select links', art: <><circle cx="5" cy="5" r="3.500" fill="#ffc83a" stroke="#d8901a" />{redX}{cursor}</> },
  { name: 'Select underlay', art: <><path d="M1 11h8M1 11l5-8" stroke="#1d6fc0" strokeWidth="2" />{redX}{cursor}</> },
  { name: 'Select pinned', art: <><path d="M2 1h8v3H2zM3 4h6v5H3zM6 9v5" fill="#f0a060" stroke="#a8501a" />{cursor}</> },
  { name: 'Select by face', art: <><path d="M2 4l6-3v10l-6 3z" fill="#bfe0ff" stroke="#1d6fc0" />{redX}{cursor}</> },
  { name: 'Drag on selection', art: <><path d="M5 0v10M0 5h10M3 2l2-2 2 2M3 8l2 2 2-2M2 3L0 5l2 2M8 3l2 2-2 2" strokeWidth="1" />{cursor}</> },
  { name: 'Background processes', art: <circle cx="8" cy="8" r="5" stroke="#aaa" strokeWidth="3" strokeDasharray="3 1" /> },
];

function StatusBar() {
  return (
    <footer className="flex h-[27px] shrink-0 items-center border-t border-white bg-[#d4d0c8] font-['Noto_Sans'] text-[11px]">
      <div className={clsx('flex flex-1 items-center', recess)}>Ready</div>
      <Svg s={16} className="mx-1.5 size-[18px]"><path d="M1 7h7v8H1z" fill="#bfe0ff" stroke="#1d6fc0" /><path d="M3 7V3l3-2 3 2v3" fill="#b9e6b9" stroke="#2a8a3a" strokeWidth="1.600" /><path d="M12 8v7M10 3v3c0 3 4 3 4 0V3" stroke="#556" strokeWidth="1.800" /></Svg>
      <StatusSelect label="Active workset" value="ARK (Not Editable)" className="w-[204px]" />
      <div className="flex w-[60px] items-end gap-1 pl-2">
        <Svg s={16} className="size-4"><path d="M5 1h9v5H9L7 8M7 6l-4 4M3 10a2 2 0 1 0 .1 0M1 15h9" fill="#fff" /></Svg>:0
      </div>
      <Svg s={16} className="mr-2.5 size-4"><path d="M1 2h14v12H1zM1 4h14M3 7h2M7 7h6M5 10h2M8 10h5M3 12.500h10" fill="#fff" /></Svg>
      <Svg s={16} className="mr-2 size-4"><path d="M0 1h13v13H0z" fill="#888" stroke="none" /><path d="M2 11h11M9 7l4 4-4 4" stroke="#333" /></Svg>
      <StatusSelect label="Design option" value="Main Model" disabled className="w-[205px]" />
      <div className={clsx('ml-1 w-[107px]', recess)} />
      <div className={clsx('ml-0.5 w-[94px]', recess)} />
      <div className="flex w-[158px] justify-between pr-1.5 pl-1">
        {selectIcons.map((s) => (
          <button key={s.name} aria-label={s.name}><Svg s={16} className="size-4">{s.art}</Svg></button>
        ))}
      </div>
      <div className={clsx('flex w-[94px] items-center', recess)}>
        <Svg s={16} className="size-[18px]"><path d="M1 2h14L10 8v6H7V8z" fill="#c9d2e0" /></Svg>:0
      </div>
    </footer>
  );
}

function App() {
  const [tab, setTab] = useState('Manage');

  return (
    <div className="flex h-screen flex-col overflow-hidden bg-[#cfccc5] font-[Roboto,'Noto_Sans',sans-serif] text-[11px] text-[#2b2b2b]">
      <div className="flex min-h-0 flex-1">
        <div className="flex w-[5px] shrink-0 flex-col bg-[#77777a]">
          <span className="mt-5 h-6 bg-[#2ba7cf]" />
          <span className="mt-auto mb-7 h-14 bg-[#f7c26b]" />
        </div>
        <div className="flex min-w-0 flex-1 flex-col">
          <div className="flex">
            <div className="w-[41px] shrink-0 bg-linear-to-b from-[#d1d1d1] from-60% to-[#9d9d9d] to-60% pt-1">
              <button aria-label="Application menu" className="flex h-10 w-10 items-center justify-center gap-0.5 border border-black bg-linear-to-b from-[#c4c4c4] to-[#777]">
                <svg viewBox="0 0 24 28" className="h-7 w-6">
                  <path d="M2 1h12c11 0 10 14 1 15l7 11h-7L8 16v11H2z" fill="#2d6fb8" />
                  <path d="M8 6h5c4 0 4 5 0 5H8z" fill="#a9b3bd" /><path d="M8 16l7 11h7l-7-11z" fill="#1d4f92" />
                </svg>
                <Arrow />
              </button>
            </div>
            <div className="min-w-0 flex-1">
              <TitleBar />
              <TabStrip tab={tab} setTab={setTab} />
            </div>
          </div>
          <Ribbon />
          <div className="flex h-[26px] shrink-0 items-center bg-[#d9e5d3] pt-0.5 pl-[7px] font-['Noto_Sans'] text-[11px]">Modify Schedule/Quantities</div>
          <main className="relative flex min-h-0 flex-1 border-t border-[#444] bg-[#808080] py-px pr-[3px] pl-0.5">
            <div className="flex w-[395px] shrink-0 flex-col gap-[3px]">
              <Window title="Floor Plan: Plan 1 - Demo_SINTEF_tmd.rvt" className="flex-1">
                <FloorPlan />
                <ViewBar scale="1 : 50" scroll list={['detail', 'box', 'sunOff', 'shadowOff', 'cropOff', 'cropBulb', 'glasses', 'bulb', 'cubes', 'film', 'analytic', 'constraint']} />
              </Window>
              <Window title="3D View: IFC-eksport - Demo_SINTEF_tmd.rvt" className="flex-1">
                <Building />
                <ViewBar scale="1 : 100" list={['detail', 'boxBlue', 'sun', 'shadowOff', 'teapot', 'crop', 'cropLamp', 'lock', 'glasses', 'bulb', 'cubes', 'film', 'analyticOff', 'cube', 'constraint']} />
              </Window>
            </div>
            <Window title="Schedule: SB_Luftmengdeskjema - Demo_SINTEF_tmd.rvt" buttons className="flex-1">
              <Schedule />
            </Window>
            <DynamoPlayer />
          </main>
          <StatusBar />
        </div>
        <div className="w-1 shrink-0 bg-[#8b8b8b]" />
      </div>
      <div className="h-2 shrink-0 border-t-4 border-b border-t-[#333] border-b-white bg-[#d4d0c8]" />
    </div>
  );
}

export default App;
